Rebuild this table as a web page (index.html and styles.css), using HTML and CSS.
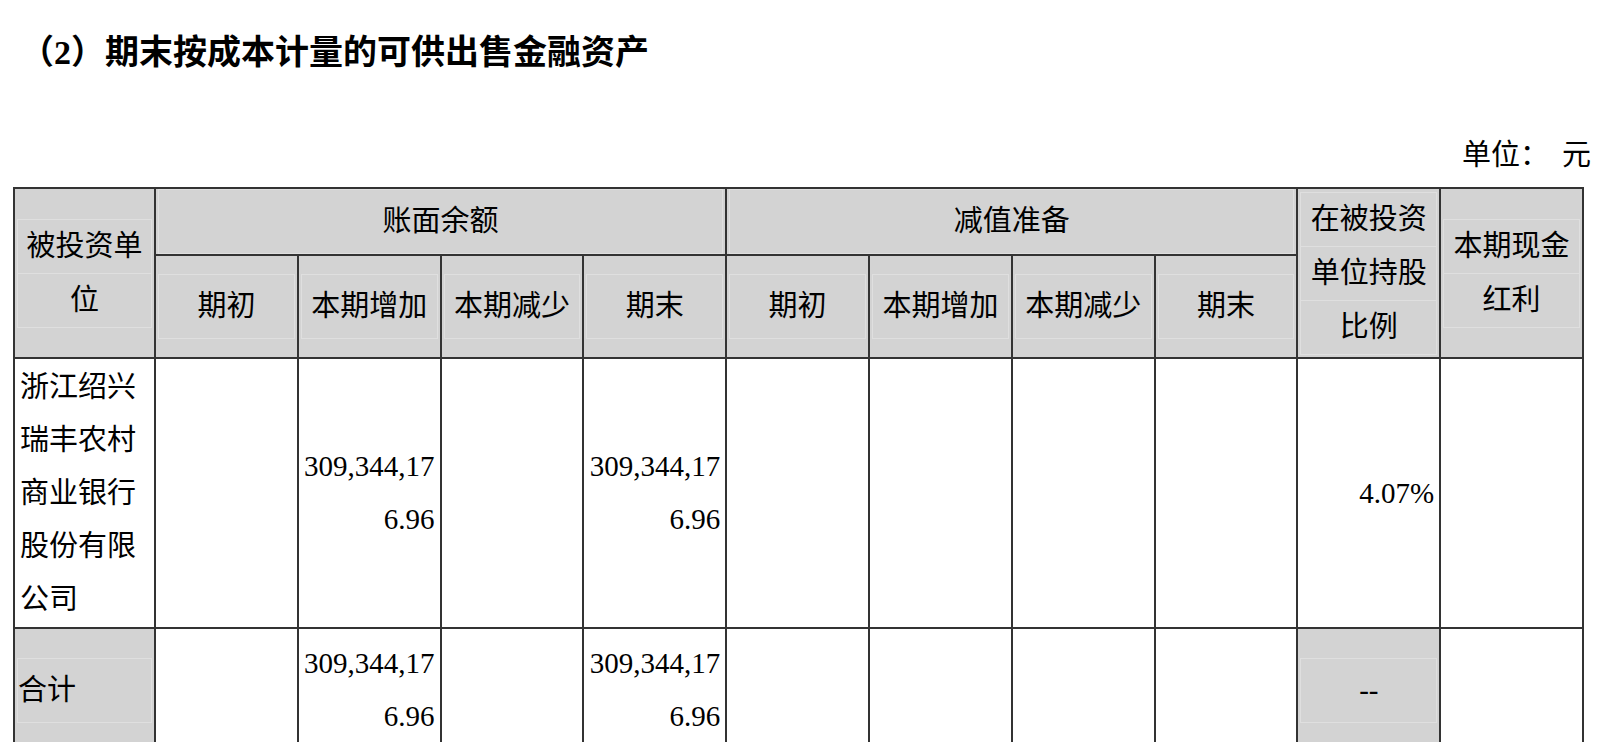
FILE: index.html
```html
<!DOCTYPE html>
<html lang="zh-CN">
<head>
<meta charset="utf-8">
<title>期末按成本计量的可供出售金融资产</title>
<link rel="stylesheet" href="styles.css">
</head>
<body>
<h1 class="title">（2）期末按成本计量的可供出售金融资产</h1>
<div class="unit">单位：<span class="unit-val">元</span></div>
<table class="grid">
  <colgroup>
    <col class="c-first">
    <col class="c"><col class="c"><col class="c"><col class="c">
    <col class="c"><col class="c"><col class="c"><col class="c">
    <col class="c"><col class="c">
  </colgroup>
  <tr class="r1">
    <td class="hd" rowspan="2"><span class="ln">被投资单</span><span class="ln">位</span></td>
    <td class="hd" colspan="4"><span class="ln single">账面余额</span></td>
    <td class="hd" colspan="4"><span class="ln single">减值准备</span></td>
    <td class="hd" rowspan="2"><span class="ln">在被投资</span><span class="ln">单位持股</span><span class="ln">比例</span></td>
    <td class="hd" rowspan="2"><span class="ln">本期现金</span><span class="ln">红利</span></td>
  </tr>
  <tr class="r2">
    <td class="hd"><span class="ln single">期初</span></td>
    <td class="hd"><span class="ln single">本期增加</span></td>
    <td class="hd"><span class="ln single">本期减少</span></td>
    <td class="hd"><span class="ln single">期末</span></td>
    <td class="hd"><span class="ln single">期初</span></td>
    <td class="hd"><span class="ln single">本期增加</span></td>
    <td class="hd"><span class="ln single">本期减少</span></td>
    <td class="hd"><span class="ln single">期末</span></td>
  </tr>
  <tr class="r3">
    <td class="name">浙江绍兴<br>瑞丰农村<br>商业银行<br>股份有限<br>公司</td>
    <td></td>
    <td class="num">309,344,17<br>6.96</td>
    <td></td>
    <td class="num">309,344,17<br>6.96</td>
    <td></td>
    <td></td>
    <td></td>
    <td></td>
    <td class="num">4.07%</td>
    <td></td>
  </tr>
  <tr class="r4">
    <td class="name shade"><span class="ln single">合计</span></td>
    <td></td>
    <td class="num">309,344,17<br>6.96</td>
    <td></td>
    <td class="num">309,344,17<br>6.96</td>
    <td></td>
    <td></td>
    <td></td>
    <td></td>
    <td class="center shade"><span class="ln single">--</span></td>
    <td></td>
  </tr>
</table>
</body>
</html>
```
FILE: styles.css
```css
html, body {
  margin: 0;
  padding: 0;
  background: #ffffff;
}

body {
  font-family: "Liberation Serif", "Noto Sans CJK SC", serif;
  color: #000;
  width: 1604px;
}

.title {
  margin: 36px 0 0 20px;
  font-size: 34px;
  line-height: 34px;
  font-weight: 700;
}

.unit {
  margin-top: 68px;
  padding-right: 13px;
  text-align: right;
  font-size: 29px;
  line-height: 34px;
}

.unit-val {
  margin-left: 13px;
}

.grid {
  margin: 15px 0 0 13px;
  border-collapse: collapse;
  table-layout: fixed;
  width: 1569px;
  font-size: 29px;
  line-height: 53px;
}

.c-first { width: 141px; }
.c { width: 142.8px; }

.grid td {
  border: 2px solid #333;
  padding: 0 5px;
  vertical-align: middle;
  overflow: hidden;
  white-space: nowrap;
}

.r1 { height: 66px; }
.r2 { height: 103px; }
.r3 { height: 270px; }
.r4 { height: 124px; }

.hd {
  background: #d3d3d3;
  text-align: center;
}

.ln {
  display: block;
  margin: 0 -3px;
  border: 1px solid #dfdfdf;
  line-height: 53px;
}

.ln + .ln {
  margin-top: -1px;
}

.ln.single {
  padding: 5px 0;
}

.name {
  text-align: left;
  padding-left: 6px;
}

.num {
  text-align: right;
}

.center {
  text-align: center;
}

.shade {
  background: #d3d3d3;
}
```
